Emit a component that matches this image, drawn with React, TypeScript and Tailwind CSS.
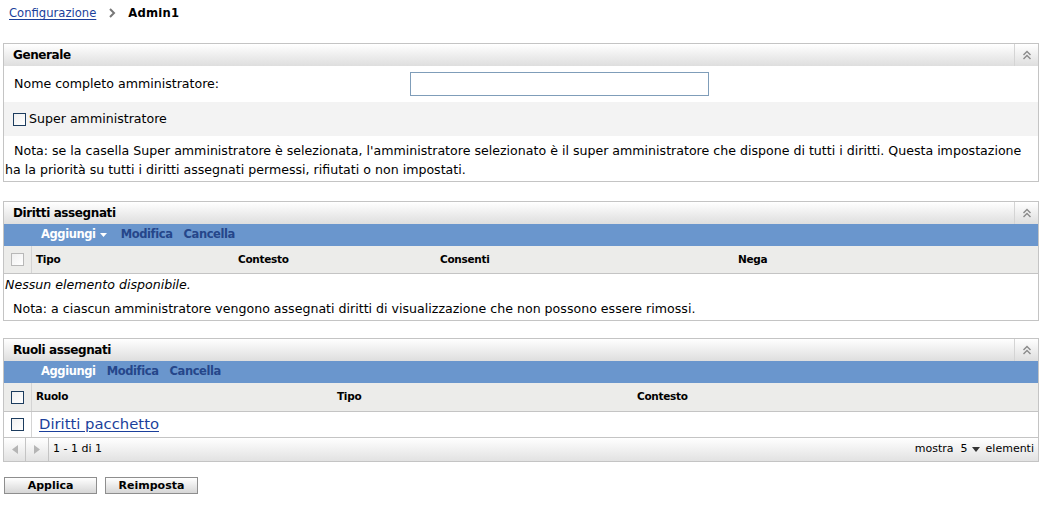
import React from "react"

const FONT = "font-['DejaVu_Sans',sans-serif]"

function CollapseIcon() {
  return (
    <div className="flex h-full w-[24px] items-center justify-center border-l border-[#d4d4d4]">
      <svg width="10" height="10" viewBox="0 0 10 10" fill="none" stroke="#8a8a8a" strokeWidth="1.4">
        <polyline points="1.5,5 5,1.5 8.5,5" />
        <polyline points="1.5,9 5,5.5 8.5,9" />
      </svg>
    </div>
  )
}

function PanelHeader({ title }: { title: string }) {
  return (
    <div className="flex h-[22px] items-center justify-between bg-gradient-to-b from-white to-[#dedede]">
      <span className="pl-[9px] text-[12px] font-bold tracking-[-0.4px]">{title}</span>
      <CollapseIcon />
    </div>
  )
}

function Checkbox({ dark }: { dark?: boolean }) {
  return (
    <span
      className={
        "inline-block h-[13px] w-[13px] border bg-gradient-to-br from-[#f0f0f0] to-white " +
        (dark ? "border-[#1c3c5e]" : "border-[#b8b8b8]")
      }
    />
  )
}

function ActionBar({ caret }: { caret?: boolean }) {
  return (
    <div className="flex h-[22px] items-center gap-[11px] bg-[#6a96cd] pl-[37px] text-[11.5px] font-bold tracking-[-0.4px]">
      <span className={"flex items-center gap-[4px] text-white " + (caret ? "mr-[3px]" : "")}>
        Aggiungi
        {caret && (
          <svg width="7" height="4" viewBox="0 0 7 4">
            <polygon points="0,0 7,0 3.5,4" fill="white" />
          </svg>
        )}
      </span>
      <span className="text-[#25468a]">Modifica</span>
      <span className="text-[#25468a]">Cancella</span>
    </div>
  )
}

function Arrow({ dir }: { dir: "l" | "r" }) {
  return (
    <svg width="6" height="9" viewBox="0 0 6 9">
      {dir === "l" ? <polygon points="6,0 6,9 0,4.5" fill="#b5b5b5" /> : <polygon points="0,0 0,9 6,4.5" fill="#b5b5b5" />}
    </svg>
  )
}

export default function App() {
  return (
    <div className={`h-[507px] w-[1042px] overflow-hidden bg-white text-[12.6px] text-black ${FONT}`}>
      {/* Breadcrumb */}
      <div className="flex h-[43px] items-start gap-[12px] pl-[9px] pt-[5px] text-[11.6px]">
        <a className="text-[#1b3f9b] underline underline-offset-2">Configurazione</a>
        <svg width="8" height="10" viewBox="0 0 8 10" className="mt-[3px]">
          <polyline points="2,1 6,5 2,9" fill="none" stroke="#777" strokeWidth="2" />
        </svg>
        <span className="font-bold tracking-[0.2px]">Admin1</span>
      </div>

      {/* Generale */}
      <div className="mx-[3px] border border-[#c4c4c4]">
        <PanelHeader title="Generale" />
        <div className="flex h-[36px] items-center">
          <span className="w-[406px] pl-[10px]">Nome completo amministratore:</span>
          <input className="h-[24px] w-[299px] border border-[#7f9db9] bg-white outline-none" />
        </div>
        <div className="flex h-[34px] items-center gap-[3px] bg-[#f3f3f3] pl-[9px]">
          <Checkbox dark />
          <span>Super amministratore</span>
        </div>
        <div className="h-[45px] pl-[1px] pt-[5px] indent-[9px] leading-[19px]">
          Nota: se la casella Super amministratore è selezionata, l'amministratore selezionato è il super amministratore che
          dispone di tutti i diritti. Questa impostazione ha la priorità su tutti i diritti assegnati permessi, rifiutati o non
          impostati.
        </div>
      </div>

      {/* Diritti assegnati */}
      <div className="mx-[3px] mt-[19px] border border-[#c4c4c4]">
        <PanelHeader title="Diritti assegnati" />
        <ActionBar caret />
        <div className="flex h-[28px] items-center border-b border-[#c4c4c4] bg-[#ececea] text-[10.5px] font-bold tracking-[-0.3px]">
          <div className="flex h-full w-[28px] items-center justify-center border-r border-[#d4d4d4]">
            <Checkbox />
          </div>
          <div className="w-[202px] pl-[4px]">Tipo</div>
          <div className="w-[202px] pl-[4px]">Contesto</div>
          <div className="w-[298px] pl-[4px]">Consenti</div>
          <div className="flex-1 pl-[4px]">Nega</div>
        </div>
        <div className="flex h-[23px] items-center pl-[1px] italic">Nessun elemento disponibile.</div>
        <div className="flex h-[23px] items-center pl-[9px] pt-[2px]">Nota: a ciascun amministratore vengono assegnati diritti di visualizzazione che non possono essere rimossi.</div>
      </div>

      {/* Ruoli assegnati */}
      <div className="mx-[3px] mt-[17px] border border-[#c4c4c4]">
        <PanelHeader title="Ruoli assegnati" />
        <ActionBar />
        <div className="flex h-[29px] items-center border-b border-[#c4c4c4] bg-[#ececea] text-[10.5px] font-bold tracking-[-0.3px]">
          <div className="flex h-full w-[28px] items-center justify-center border-r border-[#d4d4d4]">
            <Checkbox dark />
          </div>
          <div className="w-[301px] pl-[4px]">Ruolo</div>
          <div className="w-[300px] pl-[4px]">Tipo</div>
          <div className="flex-1 pl-[4px]">Contesto</div>
        </div>
        <div className="flex h-[26px] items-center border-b border-[#c4c4c4]">
          <div className="flex h-full w-[28px] items-center justify-center border-r border-[#d4d4d4]">
            <Checkbox dark />
          </div>
          <a className="pl-[7px] text-[14.8px] text-[#1b3f9b] underline underline-offset-2">Diritti pacchetto</a>
        </div>
        <div className="flex h-[23px] items-center bg-gradient-to-b from-white to-[#e2e2e2]">
          <div className="flex h-full w-[22px] items-center justify-center border-r border-[#c4c4c4]">
            <Arrow dir="l" />
          </div>
          <div className="flex h-full w-[23px] items-center justify-center border-r border-[#c4c4c4]">
            <Arrow dir="r" />
          </div>
          <span className="pl-[4px] text-[11px]">1 - 1 di 1</span>
          <span className="ml-auto flex items-center gap-[4px] pr-[4px] text-[11px]">
            mostra <span className="pl-[3px]">5</span>
            <svg width="8" height="5" viewBox="0 0 8 5">
              <polygon points="0,0 8,0 4,5" fill="#333" />
            </svg>
            <span className="pl-[2px]">elementi</span>
          </span>
        </div>
      </div>

      {/* Buttons */}
      <div className="flex gap-[8px] pl-[4px] pt-[15px]">
        <button className="h-[17px] w-[93px] border border-[#8e8e8e] bg-gradient-to-b from-white to-[#d6d6d6] text-[11px] font-bold leading-none">
          Applica
        </button>
        <button className="h-[17px] w-[93px] border border-[#8e8e8e] bg-gradient-to-b from-white to-[#d6d6d6] text-[11px] font-bold leading-none">
          Reimposta
        </button>
      </div>
    </div>
  )
}
